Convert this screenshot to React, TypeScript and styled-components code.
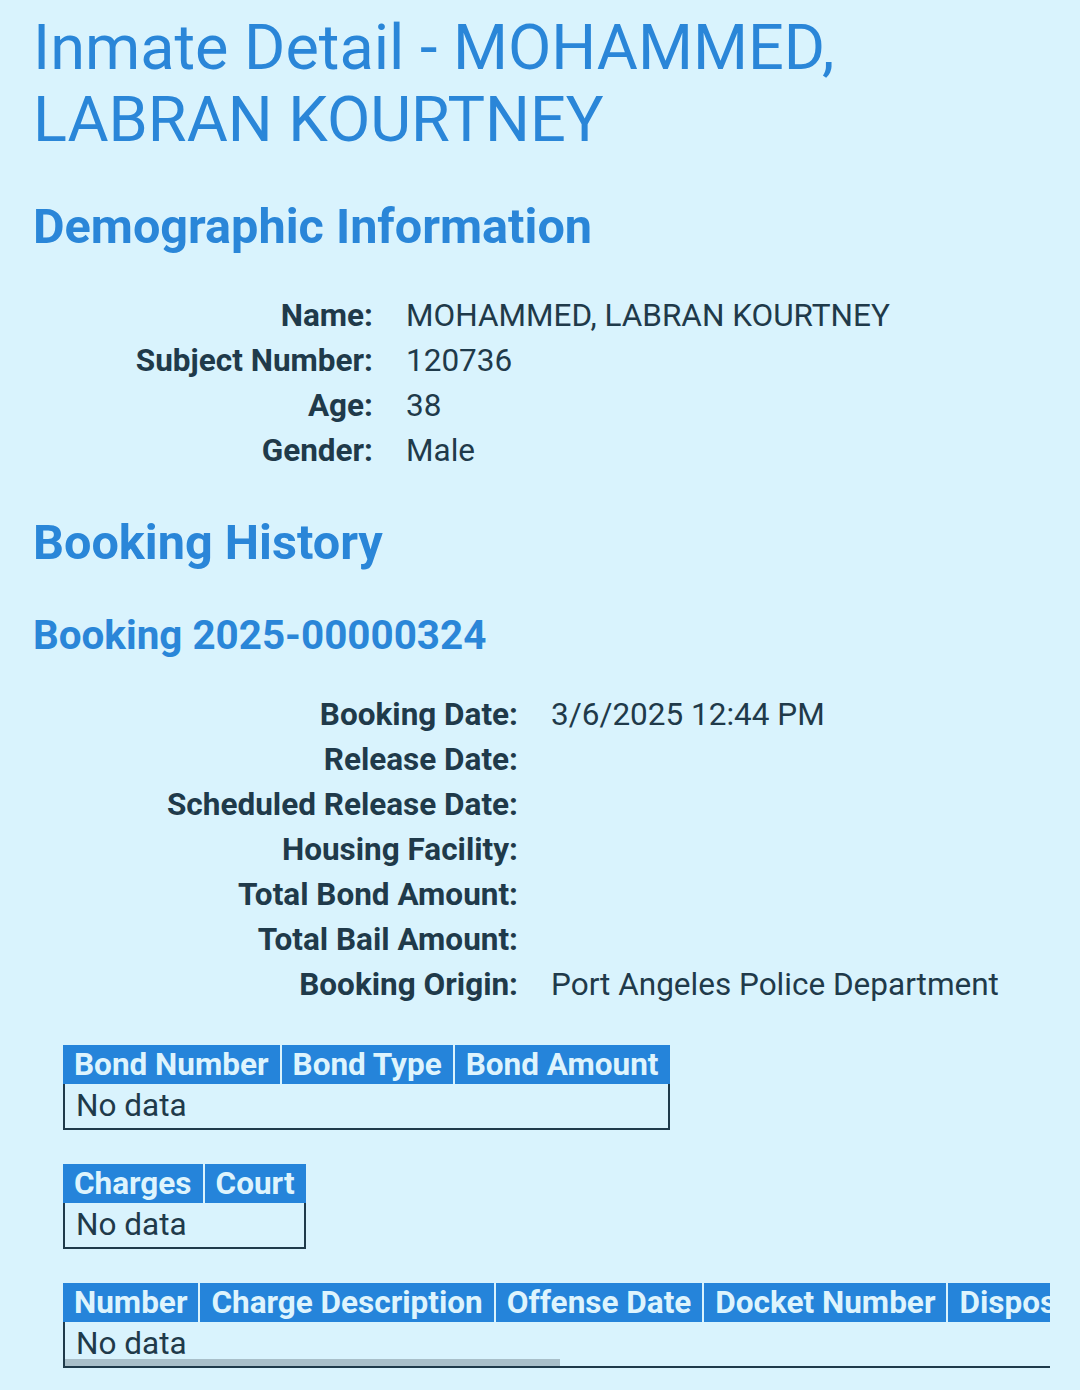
import { useLayoutEffect, useRef, useState } from 'react';
import styled, { createGlobalStyle } from 'styled-components';

const color = {
  page: '#d9f3fd',
  blue: '#2a86d8',
  header: '#2584da',
  headerText: '#def4fd',
  ink: '#1f3a4a',
  thumb: '#a9bfc9',
};

const GlobalStyle = createGlobalStyle`
  html, body {
    margin: 0;
    padding: 0;
    background: ${color.page};
  }

  body {
    font-family: Roboto, "Liberation Sans", sans-serif;
    color: ${color.ink};
  }
`;

const demographics = [
  { label: 'Name:', value: 'MOHAMMED, LABRAN KOURTNEY' },
  { label: 'Subject Number:', value: '120736' },
  { label: 'Age:', value: '38' },
  { label: 'Gender:', value: 'Male' },
];

const booking = [
  { label: 'Booking Date:', value: '3/6/2025 12:44 PM' },
  { label: 'Release Date:', value: '' },
  { label: 'Scheduled Release Date:', value: '' },
  { label: 'Housing Facility:', value: '' },
  { label: 'Total Bond Amount:', value: '' },
  { label: 'Total Bail Amount:', value: '' },
  { label: 'Booking Origin:', value: 'Port Angeles Police Department' },
];

const bondColumns = ['Bond Number', 'Bond Type', 'Bond Amount'];
const chargeColumns = ['Charges', 'Court'];
const chargeDetailColumns = [
  'Number',
  'Charge Description',
  'Offense Date',
  'Docket Number',
  'Disposition',
  'Disposition Date',
  'Sentence Date',
  'Bond Amount',
  'Bail Amount',
];

const App = () => {
  return (
    <>
      <GlobalStyle />
      <Page>
        <Title>Inmate Detail - MOHAMMED, LABRAN KOURTNEY</Title>

        <SectionTitle $top={43}>Demographic Information</SectionTitle>
        <DetailList $labelWidth={340} $top={38}>
          {demographics.map((row) => (
            <DetailRow key={row.label} label={row.label} value={row.value} />
          ))}
        </DetailList>

        <SectionTitle $top={42}>Booking History</SectionTitle>
        <BookingTitle>Booking 2025-00000324</BookingTitle>
        <DetailList $labelWidth={485} $top={32}>
          {booking.map((row) => (
            <DetailRow key={row.label} label={row.label} value={row.value} />
          ))}
        </DetailList>

        <Tables>
          <DataTable>
            <thead>
              <tr>
                {bondColumns.map((col) => (
                  <HeadCell key={col}>{col}</HeadCell>
                ))}
              </tr>
            </thead>
            <tbody>
              <tr>
                <EmptyCell colSpan={bondColumns.length}>No data</EmptyCell>
              </tr>
            </tbody>
          </DataTable>

          <DataTable>
            <thead>
              <tr>
                {chargeColumns.map((col) => (
                  <HeadCell key={col}>{col}</HeadCell>
                ))}
              </tr>
            </thead>
            <tbody>
              <tr>
                <EmptyCell colSpan={chargeColumns.length}>No data</EmptyCell>
              </tr>
            </tbody>
          </DataTable>

          <ScrollTable columns={chargeDetailColumns} />
        </Tables>
      </Page>
    </>
  );
};

const DetailRow = ({ label, value }: { label: string; value: string }) => (
  <>
    <Label>{label}</Label>
    <Value>{value}</Value>
  </>
);

// wide table in a horizontal scroller, with a thin overlay scroll indicator
const ScrollTable = ({ columns }: { columns: string[] }) => {
  const areaRef = useRef<HTMLDivElement>(null);
  const [thumb, setThumb] = useState(0.5);

  useLayoutEffect(() => {
    const el = areaRef.current;
    if (el && el.scrollWidth > 0) setThumb(el.clientWidth / el.scrollWidth);
  }, []);

  return (
    <ScrollFrame>
      <ScrollArea ref={areaRef}>
        <DataTable>
          <thead>
            <tr>
              {columns.map((col) => (
                <HeadCell key={col}>{col}</HeadCell>
              ))}
            </tr>
          </thead>
          <tbody>
            <tr>
              <OpenEmptyCell colSpan={columns.length}>No data</OpenEmptyCell>
            </tr>
          </tbody>
        </DataTable>
      </ScrollArea>
      <ScrollThumb style={{ width: `${thumb * 100}%` }} />
    </ScrollFrame>
  );
};

export default App;

const Page = styled.main`
  display: flex;
  flex-direction: column;
  padding: 12px 30px 40px 33px;
`;

const Title = styled.h1`
  margin: 0;
  font-size: 63px;
  font-weight: 400;
  line-height: 72px;
  color: ${color.blue};
`;

const SectionTitle = styled.h2<{ $top: number }>`
  margin: ${(p) => p.$top}px 0 0;
  font-size: 48.6px;
  font-weight: 700;
  line-height: 56px;
  color: ${color.blue};
`;

const BookingTitle = styled.h3`
  margin: 41px 0 0;
  font-size: 40.4px;
  font-weight: 700;
  line-height: 48px;
  color: ${color.blue};
`;

const DetailList = styled.dl<{ $labelWidth: number; $top: number }>`
  display: grid;
  grid-template-columns: ${(p) => p.$labelWidth}px auto;
  column-gap: 33px;
  margin: ${(p) => p.$top}px 0 0;
  font-size: 31.5px;
  line-height: 45px;
`;

const Label = styled.dt`
  font-weight: 700;
  text-align: right;
`;

const Value = styled.dd`
  margin: 0;
  min-height: 45px;
`;

const Tables = styled.div`
  display: flex;
  flex-direction: column;
  align-items: flex-start;
  gap: 34px;
  margin-top: 38px;
  padding-left: 30px;
`;

const DataTable = styled.table`
  border-collapse: separate;
  border-spacing: 0;
  font-size: 31.5px;
`;

const HeadCell = styled.th`
  padding: 0 11px;
  background: ${color.header};
  color: ${color.headerText};
  font-weight: 700;
  line-height: 39px;
  text-align: left;
  white-space: nowrap;

  & + & {
    border-left: 2px solid ${color.page};
  }
`;

const EmptyCell = styled.td`
  padding: 0 11px;
  border: 2px solid ${color.ink};
  border-top: none;
  font-weight: 400;
  line-height: 44px;
  text-align: left;
`;

const OpenEmptyCell = styled(EmptyCell)`
  border-right: none;
  border-bottom: none;
`;

const ScrollFrame = styled.div`
  position: relative;
  align-self: stretch;
  border-bottom: 2px solid ${color.ink};
`;

const ScrollArea = styled.div`
  overflow-x: auto;
  scrollbar-width: none;
`;

const ScrollThumb = styled.div`
  position: absolute;
  left: 2px;
  bottom: 0;
  height: 7px;
  background: ${color.thumb};
  pointer-events: none;
`;
